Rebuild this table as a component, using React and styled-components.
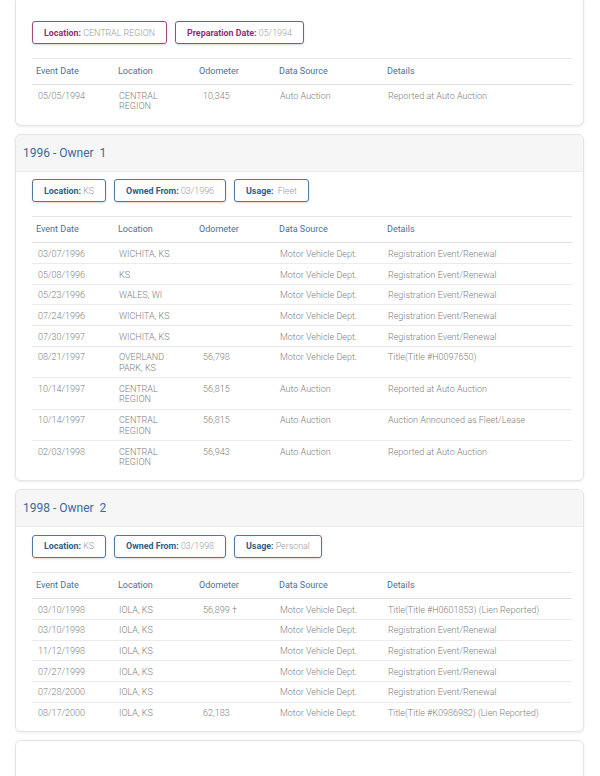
import React from "react";
import styled, { createGlobalStyle } from "styled-components";

const GlobalStyle = createGlobalStyle`
  body {
    margin: 0;
    background: #fff;
    font-family: Roboto, "Liberation Sans", sans-serif;
  }
`;

const Page = styled.div`
  padding: 0 16px 0 15px;
  display: flex;
  flex-direction: column;
  gap: 8px;
  height: 776px;
  overflow: hidden;
`;

const Card = styled.div`
  background: #fff;
  border: 1px solid #e4e4e4;
  border-radius: ${(p) => (p.$cut ? "0 0 6px 6px" : "6px")};
  border-top: ${(p) => (p.$cut ? "none" : "1px solid #e4e4e4")};
  box-shadow: 0 1px 3px rgba(0, 0, 0, 0.08);
  flex-shrink: 0;
  min-height: ${(p) => (p.$empty ? "60px" : "auto")};
`;

const CardHeader = styled.div`
  background: #f6f6f6;
  border-bottom: 1px solid #ececec;
  border-radius: 6px 6px 0 0;
  height: 36px;
  display: flex;
  align-items: center;
  padding-left: 7px;
  font-size: 12px;
  color: #3a6b9c;
  white-space: pre;
`;

const CardBody = styled.div`
  padding: ${(p) => (p.$cut ? "21px" : "7.5px")} 11px 9px 16px;
`;

const BadgeRow = styled.div`
  display: flex;
  gap: 8px;
  margin-bottom: 14px;
`;

const Badge = styled.div`
  height: 23px;
  box-sizing: border-box;
  display: flex;
  align-items: center;
  padding: 0 11px;
  border: 1.5px solid ${(p) => (p.$pink ? "#a3497f" : "#52789b")};
  border-radius: 3px;
  box-shadow: 0 1px 2px rgba(0, 0, 0, 0.15);
  font-size: 8.9px;
  color: #9a9a9a;
  font-weight: 300;
  white-space: pre;

  b {
    font-weight: 700;
    color: ${(p) => (p.$pink ? "#8e2f72" : "#2e5d88")};
  }
`;

const Table = styled.table`
  width: 100%;
  table-layout: fixed;
  border-collapse: collapse;
  border-top: 1px solid #e6e6e6;
  font-size: 9px;
  line-height: 10.7px;
`;

const Th = styled.th`
  box-sizing: border-box;
  text-align: left;
  font-weight: 400;
  color: #4f7192;
  padding: 7px 4px 7.5px;
  border-bottom: 1.5px solid #e2e2e2;
  width: ${(p) => p.$w || "auto"};
  white-space: nowrap;
`;

const Td = styled.td`
  vertical-align: top;
  color: #808080;
  font-weight: 300;
  padding: 5.5px ${(p) => p.$pr || "4px"} 3.5px ${(p) => p.$pl || "6px"};
`;

const Tr = styled.tr`
  border-bottom: ${(p) => (p.$last ? "none" : "1px solid #ebebeb")};
`;

const columns = [
  { label: "Event Date", w: "82px" },
  { label: "Location", w: "81px" },
  { label: "Odometer", w: "80px" },
  { label: "Data Source", w: "108px" },
  { label: "Details" },
];

const MVD = "Motor Vehicle Dept.";
const REG = "Registration Event/Renewal";

const sections = [
  {
    cut: true,
    pink: true,
    badges: [
      ["Location:", " CENTRAL REGION"],
      ["Preparation Date:", " 05/1994"],
    ],
    rows: [["05/05/1994", "CENTRAL REGION", "10,345", "Auto Auction", "Reported at Auto Auction"]],
  },
  {
    title: "1996 - Owner  1",
    badges: [
      ["Location:", " KS"],
      ["Owned From:", " 03/1996"],
      ["Usage:", "  Fleet"],
    ],
    rows: [
      ["03/07/1996", "WICHITA, KS", "", MVD, REG],
      ["05/08/1996", "KS", "", MVD, REG],
      ["05/23/1996", "WALES, WI", "", MVD, REG],
      ["07/24/1996", "WICHITA, KS", "", MVD, REG],
      ["07/30/1997", "WICHITA, KS", "", MVD, REG],
      ["08/21/1997", "OVERLAND PARK, KS", "56,798", MVD, "Title(Title #H0097650)"],
      ["10/14/1997", "CENTRAL REGION", "56,815", "Auto Auction", "Reported at Auto Auction"],
      ["10/14/1997", "CENTRAL REGION", "56,815", "Auto Auction", "Auction Announced as Fleet/Lease"],
      ["02/03/1998", "CENTRAL REGION", "56,943", "Auto Auction", "Reported at Auto Auction"],
    ],
  },
  {
    title: "1998 - Owner  2",
    badges: [
      ["Location:", " KS"],
      ["Owned From:", " 03/1998"],
      ["Usage:", " Personal"],
    ],
    rows: [
      ["03/10/1998", "IOLA, KS", "56,899 †", MVD, "Title(Title #H0601853) (Lien Reported)"],
      ["03/10/1998", "IOLA, KS", "", MVD, REG],
      ["11/12/1998", "IOLA, KS", "", MVD, REG],
      ["07/27/1999", "IOLA, KS", "", MVD, REG],
      ["07/28/2000", "IOLA, KS", "", MVD, REG],
      ["08/17/2000", "IOLA, KS", "62,183", MVD, "Title(Title #K0986982) (Lien Reported)"],
    ],
  },
];

function HistoryCard({ section }) {
  return (
    <Card $cut={section.cut}>
      {section.title && <CardHeader>{section.title}</CardHeader>}
      <CardBody $cut={section.cut}>
        <BadgeRow>
          {section.badges.map(([label, value]) => (
            <Badge key={label} $pink={section.pink}>
              <b>{label}</b>
              {value}
            </Badge>
          ))}
        </BadgeRow>
        <Table>
          <thead>
            <tr>
              {columns.map((c) => (
                <Th key={c.label} $w={c.w}>
                  {c.label}
                </Th>
              ))}
            </tr>
          </thead>
          <tbody>
            {section.rows.map((row, i) => (
              <Tr key={i} $last={i === section.rows.length - 1}>
                <Td>{row[0]}</Td>
                <Td $pl="5px" $pr="18px">{row[1]}</Td>
                <Td $pl="8px">{row[2]}</Td>
                <Td $pl="5px">{row[3]}</Td>
                <Td $pl="5px">{row[4]}</Td>
              </Tr>
            ))}
          </tbody>
        </Table>
      </CardBody>
    </Card>
  );
}

export default function App() {
  return (
    <>
      <GlobalStyle />
      <Page>
        {sections.map((s, i) => (
          <HistoryCard key={i} section={s} />
        ))}
        <Card $empty />
      </Page>
    </>
  );
}
